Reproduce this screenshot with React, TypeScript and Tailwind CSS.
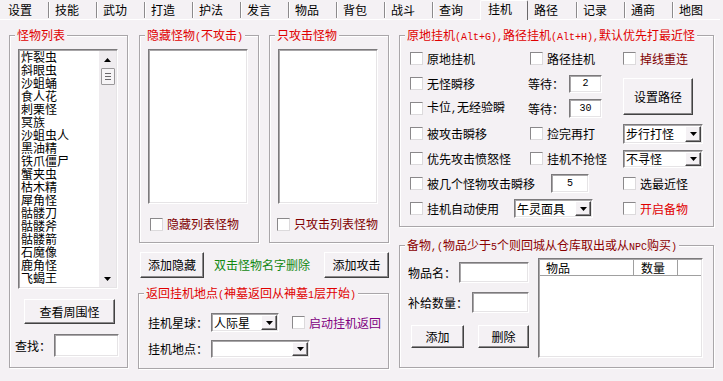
import React from 'react'

const BG = 'bg-[#f4f1f4]'
const sunken =
  'bg-white border border-t-[#7c7a7c] border-l-[#7c7a7c] border-r-white border-b-white shadow-[inset_1px_1px_0_#a8a6a8,inset_-1px_-1px_0_#e6e4e6]'
const raised =
  'border border-t-white border-l-white border-r-[#424242] border-b-[#424242] shadow-[inset_-1px_-1px_0_#8c8a8c]'

const tabs = ['设置', '技能', '武功', '打造', '护法', '发言', '物品', '背包', '战斗', '查询', '挂机', '路径', '记录', '通商', '地图']
const monsters = ['炸裂虫', '斜眼虫', '沙蛆蛹', '食人花', '刺栗怪', '冥族', '沙蛆虫人', '黑油精', '铁爪僵尸', '蟹夹虫', '枯木精', '犀角怪', '骷髅刀', '骷髅斧', '骷髅箭', '石魔像', '鹿角怪', '飞蝎王']

// 半角字符 (宋体点阵里是 6px 宽)
function M({ children }: { children: React.ReactNode }) {
  return <span className="[font-family:'Liberation_Mono',monospace] text-[10px]">{children}</span>
}

function Tri({ up = false }: { up?: boolean }) {
  return (
    <svg width="7" height="4" viewBox="0 0 7 4" className="block">
      <path d={up ? 'M3.5 0L7 4H0z' : 'M0 0h7L3.5 4z'} fill="#000" />
    </svg>
  )
}

function Group({
  title,
  titleCls = 'text-[#e00000]',
  className = '',
  children,
}: {
  title: React.ReactNode
  titleCls?: string
  className?: string
  children?: React.ReactNode
}) {
  return (
    <div className={`relative shrink-0 border border-[#a9a6a9] shadow-[inset_1px_1px_0_#fff,1px_1px_0_#fff] ${className}`}>
      <span className={`absolute -top-[8px] left-[5px] px-[2px] ${BG} whitespace-nowrap ${titleCls}`}>{title}</span>
      {children}
    </div>
  )
}

function Check({ label, color = 'text-black', className = '' }: { label: React.ReactNode; color?: string; className?: string }) {
  return (
    <div className={`flex items-center gap-[4px] whitespace-nowrap ${className}`}>
      <span className="w-[13px] h-[13px] shrink-0 bg-white border border-t-[#8a888a] border-l-[#8a888a] border-r-[#dcdadc] border-b-[#dcdadc]" />
      <span className={color}>{label}</span>
    </div>
  )
}

function Btn({ children, className = '' }: { children: React.ReactNode; className?: string }) {
  return <div className={`${raised} ${BG} shrink-0 flex items-center justify-center whitespace-nowrap ${className}`}>{children}</div>
}

function Field({ value = '', className = '' }: { value?: string; className?: string }) {
  return <div className={`${sunken} shrink-0 flex items-center justify-center ${className}`}>{value && <M>{value}</M>}</div>
}

function Select({ value = '', className = '' }: { value?: string; className?: string }) {
  return (
    <div className={`${sunken} shrink-0 flex items-stretch p-[1px] ${className}`}>
      <span className="flex-1 pl-[1px] flex items-center whitespace-nowrap leading-[12px]">{value}</span>
      <span className={`w-[16px] ${raised} ${BG} flex items-center justify-center`}>
        <Tri />
      </span>
    </div>
  )
}

function Tabs() {
  return (
    <div className="flex h-[20px]">
      {tabs.map((t, i) => {
        if (i === 10)
          return (
            <div key={t} className="w-[48px] h-[20px] border-l border-t border-white border-r border-r-[#6a686a] pl-[7px] pt-[1px] rounded-t-[2px]">
              {t}
            </div>
          )
        return (
          <div key={t} className="w-[48px] h-[20px] flex border-b border-white">
            {i > 0 && i !== 11 && <span className="mt-[2px] h-[16px] w-[2px] border-l border-[#8c8a8c] bg-white" />}
            <span className={`flex-1 pt-[3px] ${i === 0 ? 'pl-[8px]' : i === 11 ? 'pl-[6px]' : 'pl-[5px]'}`}>{t}</span>
          </div>
        )
      })}
    </div>
  )
}

function LeftColumn() {
  return (
    <Group title="怪物列表" className="ml-[9px] w-[119px] h-[333px]">
      <div className={`${sunken} ml-[8px] mt-[13px] w-[100px] h-[240px] flex p-[1px] overflow-hidden`}>
        <div className="flex-1 overflow-hidden pl-[1px]">
          <div className="-mt-[1px] leading-[13px]">
            {monsters.map((m) => (
              <div key={m} className="h-[13px] whitespace-nowrap">
                {m}
              </div>
            ))}
          </div>
        </div>
        <div className="w-[17px] bg-[#efecef] flex flex-col items-center">
          <div className="h-[17px] flex items-center justify-center">
            <Tri up />
          </div>
          <div className="w-[14px] h-[17px] border border-[#9a989a] bg-[#f6f4f6] rounded-[1px] flex flex-col items-center justify-center gap-[2px]">
            <span className="w-[6px] h-px bg-[#6a686a]" />
            <span className="w-[6px] h-px bg-[#6a686a]" />
            <span className="w-[6px] h-px bg-[#6a686a]" />
          </div>
          <div className="flex-1" />
          <div className="h-[17px] flex items-center justify-center">
            <Tri />
          </div>
        </div>
      </div>
      <Btn className="ml-[14px] mt-[10px] w-[91px] h-[25px]">查看周围怪</Btn>
      <div className="ml-[5px] mt-[10px] flex items-center gap-[3px]">
        <span>查找：</span>
        <Field className="w-[65px] h-[23px]" />
      </div>
    </Group>
  )
}

function MiddleColumn() {
  return (
    <div className="ml-[10px] w-[251px] shrink-0 flex flex-col">
      <div className="flex ml-[1px] gap-[10px]">
        <Group
          title={
            <>
              隐藏怪物<M>(</M>不攻击<M>)</M>
            </>
          }
          className="w-[120px] h-[208px]"
        >
          <div className={`${sunken} ml-[8px] mt-[13px] w-[100px] h-[155px]`} />
          <Check label="隐藏列表怪物" color="text-[#800000]" className="ml-[10px] mt-[13px]" />
        </Group>
        <Group title="只攻击怪物" className="w-[120px] h-[208px]">
          <div className={`${sunken} ml-[8px] mt-[13px] w-[100px] h-[155px]`} />
          <Check label="只攻击列表怪物" color="text-[#800000]" className="ml-[7px] mt-[13px]" />
        </Group>
      </div>
      <div className="mt-[9px] h-[26px] flex items-center">
        <Btn className="ml-[2px] w-[64px] h-[26px]">添加隐藏</Btn>
        <span className="ml-[10px] text-[#118811]">双击怪物名字删除</span>
        <Btn className="ml-auto w-[65px] h-[26px]">添加攻击</Btn>
      </div>
      <Group
        title={
          <>
            返回挂机地点<M>(</M>神墓返回从神墓<M>1</M>层开始<M>)</M>
          </>
        }
        className="mt-[15px] w-[251px] h-[76px]"
      >
        <div className="pl-[9px] mt-[19px] h-[19px] flex items-center">
          <span className="w-[63px]">挂机星球：</span>
          <Select value="人际星" className="w-[68px] h-[19px]" />
          <Check label="启动挂机返回" color="text-[#800080]" className="ml-[13px]" />
        </div>
        <div className="pl-[9px] mt-[8px] h-[18px] flex items-center">
          <span className="w-[63px]">挂机地点：</span>
          <Select className="w-[99px] h-[18px]" />
        </div>
      </Group>
    </div>
  )
}

function RightColumn() {
  return (
    <div className="ml-[10px] w-[315px] shrink-0 flex flex-col">
      <Group
        title={
          <>
            原地挂机<M>(Alt+G),</M>路径挂机<M>(Alt+H),</M>默认优先打最近怪
          </>
        }
        className="w-[315px] h-[192px]"
      >
        <div className="grid grid-cols-[118px_95px_1fr] auto-rows-[25px] items-center pl-[10px] pt-[10px]">
          <Check label="原地挂机" />
          <Check label="路径挂机" className="ml-[2px]" />
          <Check label="掉线重连" color="text-[#800000]" />

          <Check label="无怪瞬移" />
          <div className="flex items-center">
            <span className="w-[41px]">等待：</span>
            <Field value="2" className="w-[33px] h-[18px]" />
          </div>
          <Btn className="row-span-2 self-start mt-[7px] w-[70px] h-[37px]">设置路径</Btn>

          <Check
            label={
              <>
                卡位<M>,</M>无经验瞬
              </>
            }
          />
          <div className="flex items-center">
            <span className="w-[41px]">等待：</span>
            <Field value="30" className="w-[33px] h-[19px]" />
          </div>

          <Check label="被攻击瞬移" />
          <Check label="捡完再打" className="ml-[2px]" />
          <Select value="步行打怪" className="w-[80px] h-[20px]" />

          <Check label="优先攻击愤怒怪" />
          <Check label="挂机不抢怪" className="ml-[2px]" />
          <Select value="不寻怪" className="w-[80px] h-[18px]" />

          <div className="col-span-2 flex items-center">
            <Check label="被几个怪物攻击瞬移" />
            <Field value="5" className="ml-[16px] w-[38px] h-[19px]" />
          </div>
          <Check label="选最近怪" />

          <div className="col-span-2 flex items-center">
            <Check label="挂机自动使用" />
            <Select value="午灵面具" className="ml-[15px] w-[79px] h-[19px]" />
          </div>
          <Check label="开启备物" color="text-[#e00000]" />
        </div>
      </Group>
      <Group
        title={
          <>
            备物<M>,(</M>物品少于<M>5</M>个则回城从仓库取出或从<M>NPC</M>购买<M>)</M>
          </>
        }
        titleCls="text-[#8b0000]"
        className="mt-[18px] w-[315px] h-[123px]"
      >
        <div className="flex items-start pl-[8px]">
          <div className="mt-[16px] w-[121px] flex flex-col">
            <div className="h-[21px] flex items-center justify-between">
              <span>物品名：</span>
              <Field className="w-[70px] h-[21px]" />
            </div>
            <div className="mt-[9px] h-[21px] flex items-center justify-between">
              <span>补给数量：</span>
              <Field className="w-[57px] h-[21px]" />
            </div>
            <div className="mt-[12px] h-[23px] flex">
              <Btn className="ml-[3px] w-[53px] h-[23px]">添加</Btn>
              <Btn className="ml-[14px] w-[51px] h-[23px]">删除</Btn>
            </div>
          </div>
          <div className={`${sunken} ml-[9px] mt-[12px] w-[165px] h-[100px] p-[1px]`}>
            <div className="flex h-[16px] border-b border-[#a0a0a0] bg-white">
              <span className="w-[94px] pl-[6px] border-r border-[#a0a0a0] leading-[15px]">物品</span>
              <span className="w-[44px] pl-[7px] border-r border-[#a0a0a0] leading-[15px]">数量</span>
            </div>
          </div>
        </div>
      </Group>
    </div>
  )
}

export default function App() {
  return (
    <div className={`w-[723px] h-[381px] overflow-hidden ${BG} text-[12px] leading-[14px] text-black [font-family:'Noto_Sans_CJK_SC',sans-serif]`}>
      <Tabs />
      <div className="flex items-start pt-[15px]">
        <LeftColumn />
        <MiddleColumn />
        <RightColumn />
      </div>
    </div>
  )
}
